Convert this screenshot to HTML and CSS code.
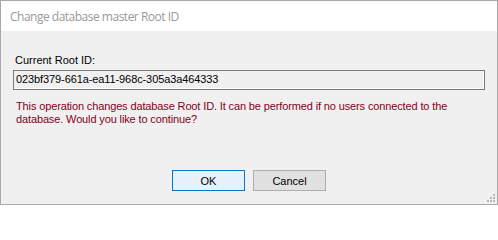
FILE: index.html
```html
<!DOCTYPE html>
<html>
<head>
<meta charset="utf-8">
<link rel="stylesheet" href="styles.css">
</head>
<body>
<div class="window">
  <div class="titlebar">Change database master Root ID</div>
  <div class="content">
    <div class="label">Current Root ID:</div>
    <div class="textbox">023bf379-661a-ea11-968c-305a3a464333</div>
    <div class="message">This operation changes database Root ID. It can be performed if no users connected to the<br>database. Would you like to continue?</div>
    <div class="buttons">
      <div class="btn btn-default">OK</div>
      <div class="btn">Cancel</div>
    </div>
    <svg class="grip" width="10" height="10" viewBox="0 0 10 10">
      <rect x="7" y="1" width="2" height="2" fill="#b8b8b8"/>
      <rect x="4" y="4" width="2" height="2" fill="#b8b8b8"/>
      <rect x="7" y="4" width="2" height="2" fill="#b8b8b8"/>
      <rect x="1" y="7" width="2" height="2" fill="#b8b8b8"/>
      <rect x="4" y="7" width="2" height="2" fill="#b8b8b8"/>
      <rect x="7" y="7" width="2" height="2" fill="#b8b8b8"/>
    </svg>
  </div>
</div>
</body>
</html>
```

FILE: styles.css
```css
html, body {
  margin: 0;
  padding: 0;
  background: #ffffff;
}

.window {
  width: 498px;
  height: 205px;
  box-sizing: border-box;
  border: 1px solid #a8a8a8;
  display: flex;
  flex-direction: column;
  background: #f0f0f0;
  font-family: "Liberation Sans", Arial, sans-serif;
  font-size: 11px;
  color: #000;
}

.titlebar {
  height: 30px;
  flex: none;
  background: #ffffff;
  padding-left: 9px;
  display: flex;
  align-items: center;
  font-family: "Open Sans", "Noto Sans", sans-serif;
  font-size: 12px;
  letter-spacing: -0.5px;
  color: #999999;
}

.content {
  flex: 1;
  display: flex;
  flex-direction: column;
  padding: 23px 12px 13px 12px;
  position: relative;
}

.label {
  margin-left: 2px;
  line-height: 13px;
}

.textbox {
  margin-top: 3px;
  height: 20px;
  box-sizing: border-box;
  border: 1px solid #7a7a7a;
  box-shadow: inset -1px -1px 0 #ffffff;
  padding-left: 2px;
  line-height: 17px;
  letter-spacing: -0.1px;
  background: #f0f0f0;
}

.message {
  margin-top: 10px;
  margin-left: 3px;
  line-height: 13px;
  letter-spacing: -0.13px;
  color: #850020;
}

.buttons {
  margin-top: auto;
  display: flex;
  justify-content: center;
  gap: 8px;
}

.btn {
  width: 73px;
  height: 21px;
  box-sizing: border-box;
  border: 1px solid #adadad;
  background: #e1e1e1;
  display: flex;
  align-items: center;
  justify-content: center;
}

.btn-default {
  border-color: #0078d7;
  background: #e5f1fb;
}

.grip {
  position: absolute;
  right: 1px;
  bottom: 1px;
}
```
